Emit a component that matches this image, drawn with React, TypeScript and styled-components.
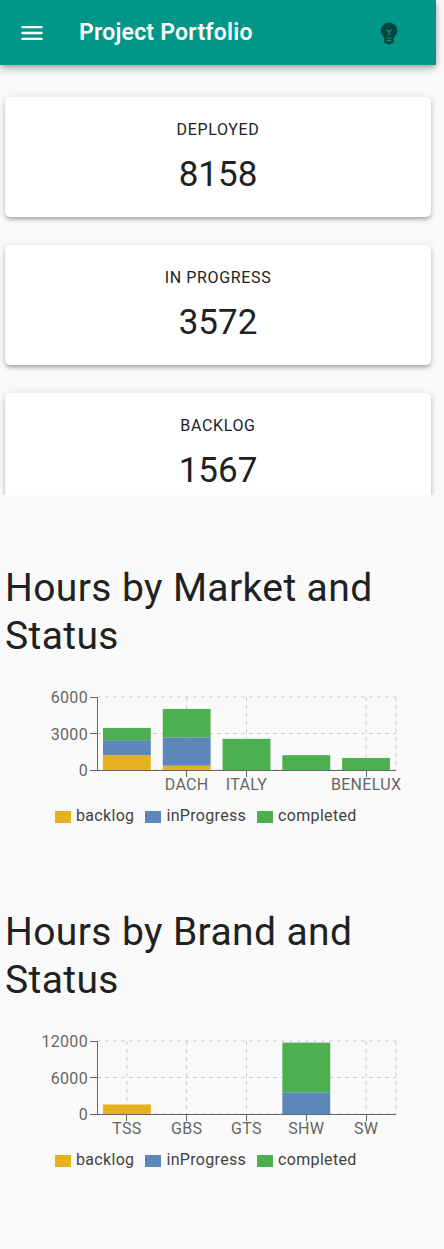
import React, { useLayoutEffect, useRef, useState } from "react";
import styled, { createGlobalStyle } from "styled-components";

const GlobalStyle = createGlobalStyle`
  *, *::before, *::after { box-sizing: border-box; }
  body {
    margin: 0;
    background: #fafafa;
    color: #212121;
    font-family: Roboto, "Liberation Sans", sans-serif;
    font-size: 16px;
  }
`;

const Page = styled.div`
  padding-right: 8px;
`;

const AppBar = styled.header`
  display: flex;
  align-items: center;
  height: 65px;
  padding: 0 29px 0 14px;
  background: #009688;
  color: #fff;
  box-shadow: 0 2px 5px -1px rgba(0, 0, 0, 0.2), 0 5px 6px rgba(0, 0, 0, 0.14),
    0 1px 12px rgba(0, 0, 0, 0.12);
`;

const IconButton = styled.button<{ $muted?: boolean }>`
  display: flex;
  padding: 4px;
  border: 0;
  background: none;
  color: ${({ $muted }) => ($muted ? "rgba(0, 0, 0, 0.54)" : "#fff")};
  cursor: pointer;

  svg {
    width: 28px;
    height: 28px;
    fill: currentColor;
  }
`;

const Title = styled.h1`
  flex: 1;
  margin: 0 0 0 29px;
  font-size: 23px;
  font-weight: 600;
  line-height: 32px;
  letter-spacing: 0.01em;
`;

const CardList = styled.section`
  display: flex;
  flex-direction: column;
  gap: 28px;
  height: 430px;
  padding: 32px 5px 0;
  overflow: hidden;
`;

const Card = styled.article`
  flex: none;
  padding: 21px 16px 18px;
  border-radius: 5px;
  background: #fff;
  text-align: center;
  box-shadow: 0 3px 4px -2px rgba(0, 0, 0, 0.2), 0 3px 4px rgba(0, 0, 0, 0.14),
    0 1px 9px rgba(0, 0, 0, 0.12);
`;

const CardLabel = styled.h2`
  margin: 0;
  font-size: 16px;
  font-weight: 400;
  line-height: 24px;
  letter-spacing: 0.04em;
`;

const CardValue = styled.p`
  margin: 8px 0 0;
  font-size: 35px;
  line-height: 49px;
`;

const ChartSection = styled.section`
  padding: 69px 5px 0;

  & + & {
    padding-top: 80px;
  }
`;

const ChartTitle = styled.h2`
  margin: 0;
  font-size: 39px;
  font-weight: 400;
  line-height: 48px;
  letter-spacing: 0.01em;
`;

const Plot = styled.svg`
  display: block;
  width: 100%;
  height: 120px;
  margin-top: 24px;
  overflow: visible;
  font-size: 16px;
  letter-spacing: 0.02em;
  fill: #666;
`;

const Legend = styled.ul`
  display: flex;
  gap: 11px;
  margin: 0;
  padding: 0 0 0 50px;
  list-style: none;
  color: #424242;
  line-height: 24px;
  letter-spacing: 0.02em;
`;

const LegendItem = styled.li<{ $color: string }>`
  display: flex;
  align-items: center;
  gap: 5px;

  &::before {
    content: "";
    width: 16px;
    height: 12px;
    margin-top: 2px;
    background: ${({ $color }) => $color};
  }
`;

type Series = "backlog" | "inProgress" | "completed";
type Row = { name: string } & Record<Series, number>;

const SERIES: { key: Series; color: string }[] = [
  { key: "backlog", color: "#e6b11f" },
  { key: "inProgress", color: "#5d86b9" },
  { key: "completed", color: "#4caf50" },
];

const CARDS = [
  { label: "DEPLOYED", value: 8158 },
  { label: "IN PROGRESS", value: 3572 },
  { label: "BACKLOG", value: 1567 },
];

const MARKETS: Row[] = [
  { name: "", backlog: 1220, inProgress: 1230, completed: 1010 },
  { name: "DACH", backlog: 350, inProgress: 2330, completed: 2340 },
  { name: "ITALY", backlog: 0, inProgress: 0, completed: 2560 },
  { name: "", backlog: 0, inProgress: 0, completed: 1220 },
  { name: "BENELUX", backlog: 0, inProgress: 0, completed: 990 },
];

const BRANDS: Row[] = [
  { name: "TSS", backlog: 1567, inProgress: 0, completed: 0 },
  { name: "GBS", backlog: 0, inProgress: 0, completed: 0 },
  { name: "GTS", backlog: 0, inProgress: 0, completed: 0 },
  { name: "SHW", backlog: 0, inProgress: 3572, completed: 8158 },
  { name: "SW", backlog: 0, inProgress: 0, completed: 0 },
];

const LEFT = 92;
const RIGHT = 35;
const TOP = 13;
const HEIGHT = 73;

function StackedBars({ title, rows, max }: { title: string; rows: Row[]; max: number }) {
  const ref = useRef<SVGSVGElement>(null);
  const [width, setWidth] = useState(426);

  useLayoutEffect(() => {
    const node = ref.current;
    if (!node) return;
    const measure = () => setWidth(node.getBoundingClientRect().width);
    measure();
    const observer = new ResizeObserver(measure);
    observer.observe(node);
    return () => observer.disconnect();
  }, []);

  const right = Math.max(LEFT + 50, width - RIGHT);
  const band = (right - LEFT) / rows.length;
  const bottom = TOP + HEIGHT;
  const barWidth = band * 0.8;
  const center = (i: number) => LEFT + band * (i + 0.5);

  return (
    <ChartSection>
      <ChartTitle>{title}</ChartTitle>
      <Plot ref={ref} role="img" aria-label={title}>
        <g stroke="#ccc" strokeDasharray="4 4">
          {[0, 0.5, 1].map((t) => (
            <line key={t} x1={LEFT} x2={right} y1={bottom - t * HEIGHT} y2={bottom - t * HEIGHT} />
          ))}
          {rows.map((row, i) =>
            row.name ? <line key={i} x1={center(i)} x2={center(i)} y1={TOP} y2={bottom} /> : null
          )}
          <line x1={right} x2={right} y1={TOP} y2={bottom} />
        </g>
        {rows.map((row, i) => {
          let top = bottom;
          return SERIES.map(({ key, color }) => {
            const h = (row[key] / max) * HEIGHT;
            top -= h;
            return h ? (
              <rect key={i + key} x={center(i) - barWidth / 2} y={top} width={barWidth} height={h} fill={color} />
            ) : null;
          });
        })}
        <g stroke="#666" shapeRendering="crispEdges">
          <line x1={LEFT} x2={LEFT} y1={TOP} y2={bottom} />
          <line x1={LEFT} x2={right} y1={bottom} y2={bottom} />
          {[0, 0.5, 1].map((t) => (
            <line key={t} x1={LEFT - 7} x2={LEFT} y1={bottom - t * HEIGHT} y2={bottom - t * HEIGHT} />
          ))}
          {rows.map((row, i) =>
            row.name ? <line key={i} x1={center(i)} x2={center(i)} y1={bottom} y2={bottom + 7} /> : null
          )}
        </g>
        {[0, 0.5, 1].map((t) => (
          <text key={t} x={LEFT - 9} y={bottom - t * HEIGHT + 6} textAnchor="end">
            {t * max}
          </text>
        ))}
        {rows.map((row, i) =>
          row.name ? (
            <text key={i} x={center(i)} y={bottom + 20} textAnchor="middle">
              {row.name}
            </text>
          ) : null
        )}
      </Plot>
      <Legend>
        {SERIES.map(({ key, color }) => (
          <LegendItem key={key} $color={color}>
            {key}
          </LegendItem>
        ))}
      </Legend>
    </ChartSection>
  );
}

export default function App() {
  return (
    <>
      <GlobalStyle />
      <Page>
        <AppBar>
          <IconButton type="button" aria-label="Open menu">
            <svg viewBox="0 0 24 24">
              <path d="M3 18h18v-2H3v2zm0-5h18v-2H3v2zm0-7v2h18V6H3z" />
            </svg>
          </IconButton>
          <Title>Project Portfolio</Title>
          <IconButton type="button" aria-label="Toggle theme" $muted>
            <svg viewBox="0 0 24 24">
              <path d="M12 3c-.46 0-.93.04-1.4.14-2.76.53-4.96 2.76-5.48 5.52-.48 2.61.48 5.01 2.22 6.56.43.38.66.91.66 1.47V19c0 1.1.9 2 2 2h.28c.35.6.98 1 1.72 1s1.38-.4 1.72-1H14c1.1 0 2-.9 2-2v-2.31c0-.55.22-1.09.64-1.46C18.09 13.95 19 12.08 19 10c0-3.87-3.13-7-7-7zm2 16h-4v-1h4v1zm0-2h-4v-1h4v1zm-1.5-5.59V14h-1v-2.59L9.67 9.59l.71-.71L12 10.5l1.62-1.62.71.71-1.83 1.82z" />
            </svg>
          </IconButton>
        </AppBar>
        <main>
          <CardList>
            {CARDS.map(({ label, value }) => (
              <Card key={label}>
                <CardLabel>{label}</CardLabel>
                <CardValue>{value}</CardValue>
              </Card>
            ))}
          </CardList>
          <StackedBars title="Hours by Market and Status" rows={MARKETS} max={6000} />
          <StackedBars title="Hours by Brand and Status" rows={BRANDS} max={12000} />
        </main>
      </Page>
    </>
  );
}
